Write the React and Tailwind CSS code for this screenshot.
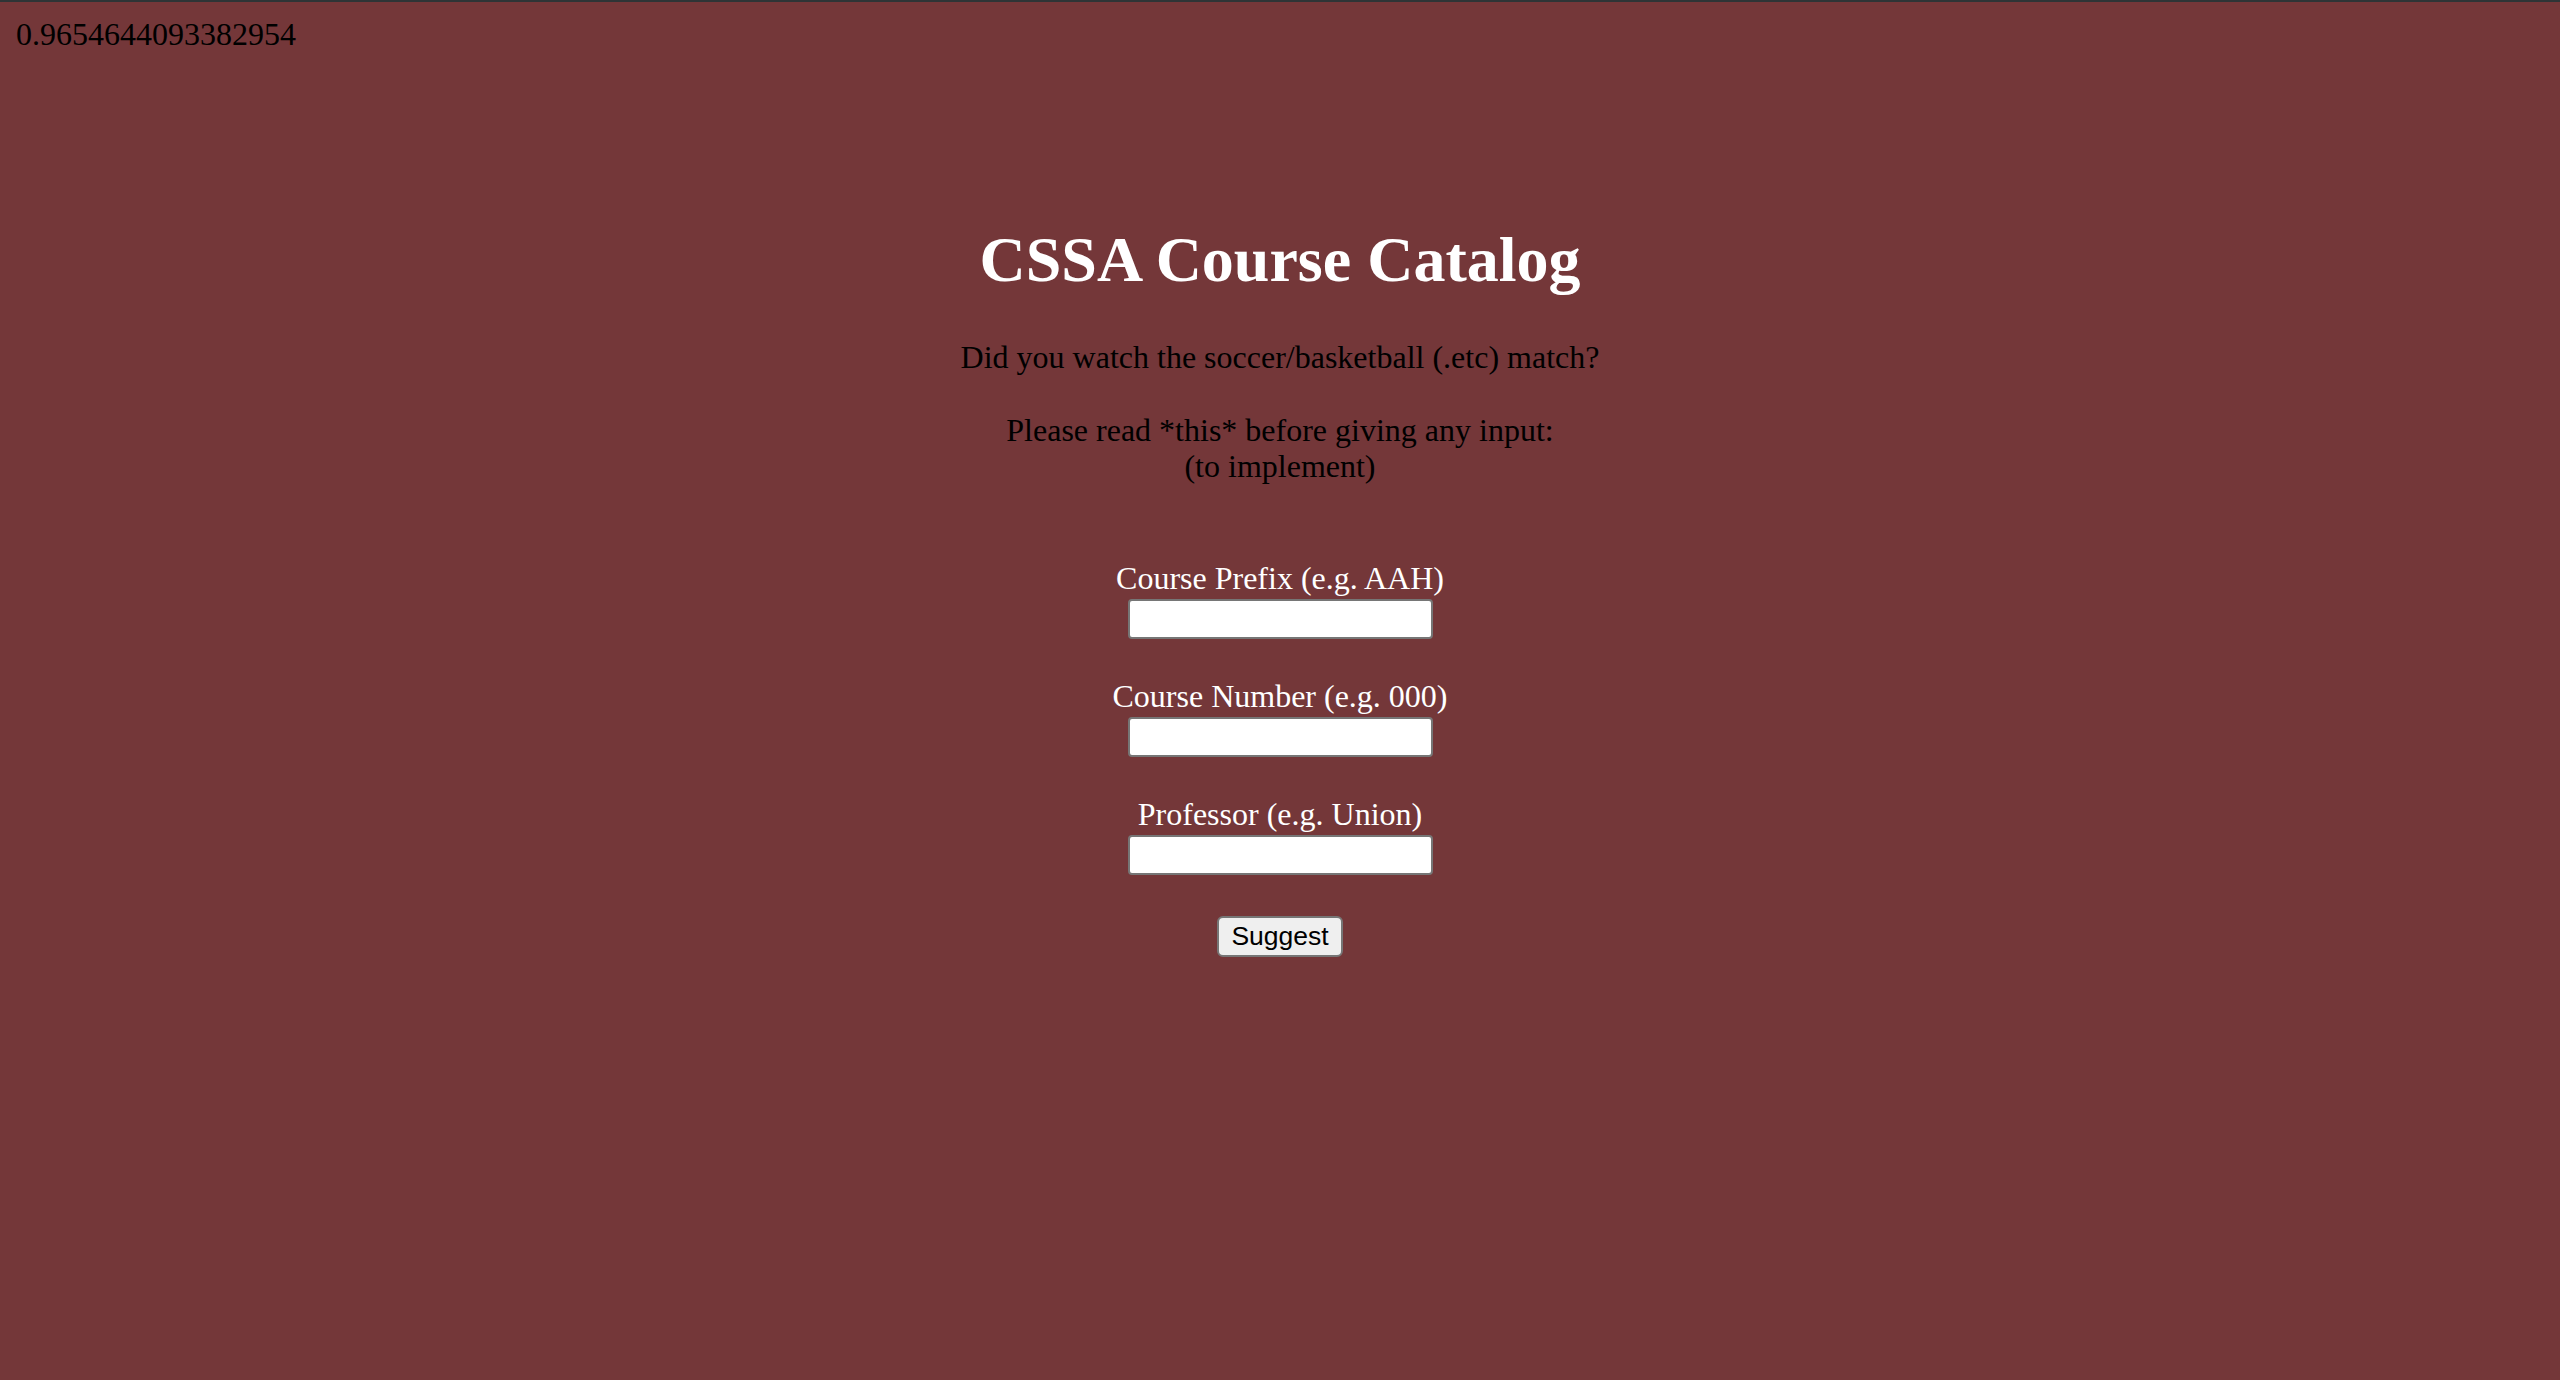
import React, { useState } from 'react';

const serif = { fontFamily: '"Liberation Serif", "Times New Roman", serif' };

const Field = ({ label, value, onChange, className }) => (
    <div className={`flex flex-col items-center ${className}`}>
        <label className="text-[32px] leading-[37px] text-white">{label}</label>
        <input
            type="text"
            value={value}
            onChange={(e) => onChange(e.target.value)}
            className="mt-[2px] w-[305px] h-[40px] bg-white border-2 border-[#767676] rounded-[4px] px-1 text-[26px] text-black outline-none"
        />
    </div>
);

const App = () => {
    const [prefix, setPrefix] = useState('');
    const [number, setNumber] = useState('');
    const [professor, setProfessor] = useState('');

    return (
        <div className="min-h-screen w-full bg-[#743739] border-t-2 border-[#2e3436]" style={serif}>
            <div className="px-4 pt-[14px]">
                <div className="text-[32px] leading-[37px] text-black">0.9654644093382954</div>

                <div className="flex flex-col items-center">
                    <h1 className="mt-[170px] text-[64px] leading-[74px] font-bold text-white">CSSA Course Catalog</h1>
                    <p className="mt-[42px] text-[32px] leading-[37px] text-black">Did you watch the soccer/basketball (.etc) match?</p>
                    <p className="mt-[36px] text-[32px] leading-[36px] text-black text-center">
                        Please read *this* before giving any input:
                        <br />
                        (to implement)
                    </p>

                    {/* form */}
                    <Field className="mt-[76px]" label="Course Prefix (e.g. AAH)" value={prefix} onChange={setPrefix} />
                    <Field className="mt-[39px]" label="Course Number (e.g. 000)" value={number} onChange={setNumber} />
                    <Field className="mt-[39px]" label="Professor (e.g. Union)" value={professor} onChange={setProfessor} />

                    <button
                        className="mt-[41px] w-[126px] h-[41px] bg-[#efefef] border-2 border-[#767676] rounded-[6px] text-[26.5px] text-black leading-none"
                        style={{ fontFamily: '"Liberation Sans", Arial, sans-serif' }}
                    >
                        Suggest
                    </button>
                </div>
            </div>
        </div>
    );
};

export default App;
